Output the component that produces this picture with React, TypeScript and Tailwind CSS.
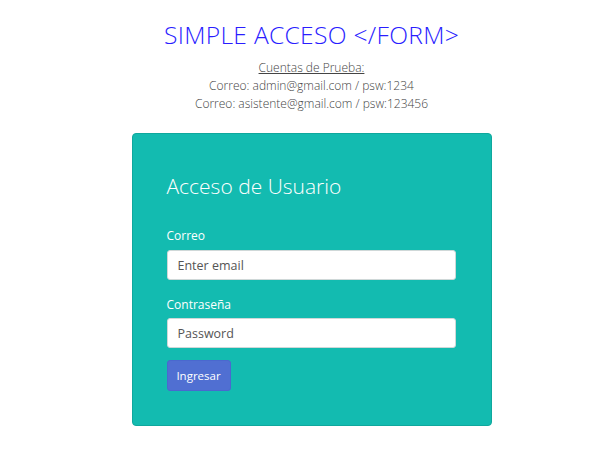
export default function App() {
  return (
    <div className="min-h-[454px] w-full bg-white font-['Open_Sans',sans-serif] flex flex-col items-center pl-[16px]">
      <h1 className="mt-[20px] text-[24.6px] leading-[30px] font-light tracking-[0.3px] text-[#2a1dff]">
        SIMPLE ACCESO &lt;/FORM&gt;
      </h1>
      <div className="mt-[9px] text-center text-[12px] leading-[18px] font-light text-[#444]">
        <p className="underline">Cuentas de Prueba:</p>
        <p>Correo: admin@gmail.com / psw:1234</p>
        <p>Correo: asistente@gmail.com / psw:123456</p>
      </div>
      <div className="mt-[20px] w-[360px] h-[293px] rounded-[4px] border border-[#0fa89d] bg-[#13bbb0] px-[34px] pt-[38px]">
        <h2 className="text-[21px] leading-[28px] font-light text-white">Acceso de Usuario</h2>
        <form className="mt-[28px] flex flex-col" onSubmit={(e) => e.preventDefault()}>
          <label className="text-[12px] leading-[16px] text-white">Correo</label>
          <input
            type="email"
            placeholder="Enter email"
            className="mt-[6px] w-[289px] h-[30px] rounded-[3px] border border-[#cfd8d8] bg-white px-[10px] text-[12.5px] text-[#495057] placeholder:text-[#555] outline-none"
          />
          <label className="mt-[17px] text-[12px] leading-[16px] text-white">Contraseña</label>
          <input
            type="password"
            placeholder="Password"
            className="mt-[5px] w-[289px] h-[30px] rounded-[3px] border border-[#cfd8d8] bg-white px-[10px] text-[12.5px] text-[#495057] placeholder:text-[#555] outline-none"
          />
          <div className="mt-[12px]">
            <button
              type="submit"
              className="h-[31px] w-[64px] rounded-[3px] border border-[#4a68cf] bg-[#506fd2] text-[11.5px] text-white"
            >
              Ingresar
            </button>
          </div>
        </form>
      </div>
    </div>
  );
}
